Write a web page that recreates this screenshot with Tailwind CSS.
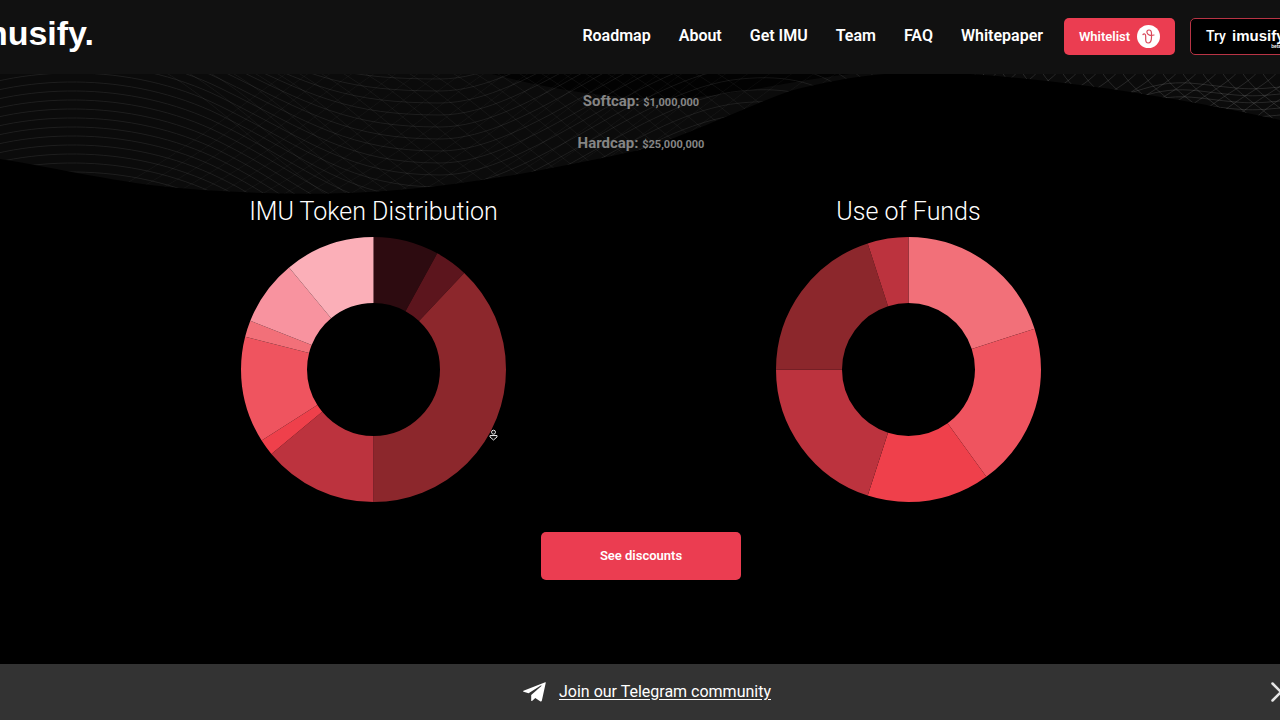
<!DOCTYPE html>
<html lang="en">
<head>
  <meta charset="UTF-8">
  <meta name="viewport" content="width=device-width, initial-scale=1.0">
  <title>imusify. - Token Sale</title>
  <script src="https://cdn.jsdelivr.net/npm/@tailwindcss/browser@4"></script>
</head>
<body class="min-h-screen flex flex-col overflow-x-hidden bg-black font-['Roboto',sans-serif] text-white">
  <header class="h-[74px] overflow-hidden bg-[#111111]">
    <div class="-mx-4 flex h-[73px] items-center justify-between">
      <a href="#" class="-ml-4 pb-2 font-['Liberation_Sans',sans-serif] text-[34px] leading-10 font-bold">imusify.</a>
      <div class="flex shrink-0 items-center">
        <nav class="mr-[21px] flex gap-7 pb-0.5 text-base font-semibold whitespace-nowrap">
          <a href="#roadmap">Roadmap</a>
          <a href="#about">About</a>
          <a href="#get-imu">Get IMU</a>
          <a href="#team">Team</a>
          <a href="#faq">FAQ</a>
          <a href="#whitepaper">Whitepaper</a>
        </nav>
        <button type="button" class="mr-[15px] flex h-[37px] w-[111px] items-center justify-center gap-[7px] rounded-[5px] bg-[#eb3d51] text-[13px] font-semibold">
          Whitelist
          <svg class="size-[23px]" viewBox="0 0 23 23" fill="none" aria-hidden="true">
            <circle cx="11.5" cy="11.5" r="11.5" fill="#fff"/>
            <path d="M6 9.500C7 8.300 8.700 8.800 8.700 11V14.500C8.700 16.800 9.600 18 11.200 18C13.700 18 14.500 15.500 14.500 12V8.500C14.500 6.300 13.500 5 12 5C10.300 5 9.600 6.300 10 7.600C10.600 9.800 13.500 11.200 17 10" stroke="#d9485a" stroke-width="1.200" stroke-linecap="round"/>
          </svg>
        </button>
        <button type="button" class="relative flex h-[37px] w-[106px] items-center gap-[6px] rounded-[5px] border border-[#b83445] bg-black pb-0.5 pl-[15px] text-sm font-medium">
          Try
          <span class="font-['Liberation_Sans',sans-serif] text-[15px] leading-4 font-bold">imusify</span>
          <span class="absolute right-[14px] bottom-[5px] text-[5px] leading-[5px]">beta</span>
        </button>
      </div>
    </div>
  </header>

  <main class="relative flex flex-1 flex-col items-center pt-[15px] pl-0.5">
    <!-- wave background -->
    <svg class="absolute top-0 left-0 h-[122px] w-full" viewBox="0 0 1280 122" preserveAspectRatio="none" fill="none" aria-hidden="true">
      <clipPath id="wave-clip">
        <path d="M0 0V85C40 91 80 101 150 111C220 119 300 122 370 118C470 112 560 93 640 76C700 56 740 35 790 17C820 9 850 3 885 0H970C1070 7 1170 22 1280 46V0Z"/>
      </clipPath>
      <g clip-path="url(#wave-clip)">
        <rect width="1280" height="122" fill="#0b0b0b"/>
        <path d="M492 0C560 18 620 26 680 24C740 21 780 8 850 0Z" fill="#020202"/>
        <g id="wave-lines" stroke="#fff"></g>
      </g>
    </svg>

    <div class="relative flex flex-col items-center gap-[18px] text-[15px] leading-6 font-bold text-[#858585]">
      <p class="h-6">Softcap: <span class="text-[11px]">$1,000,000</span></p>
      <p class="h-6">Hardcap: <span class="text-[11px]">$25,000,000</span></p>
    </div>

    <div class="relative mt-[39px] grid w-full max-w-[1070px] grid-cols-2">
      <section class="flex flex-col items-center gap-[7px]">
        <h2 class="text-[25px] leading-9 font-light">IMU Token Distribution</h2>
        <div class="relative">
          <svg class="size-[265px] -rotate-90" viewBox="0 0 265 265" fill="none" stroke-width="66" role="img" aria-label="IMU Token Distribution">
            <circle cx="132.5" cy="132.5" r="99.5" pathLength="100" stroke="#2d0b10" stroke-dasharray="8 92"/>
            <circle cx="132.5" cy="132.5" r="99.5" pathLength="100" stroke="#5c151d" stroke-dasharray="4 96" stroke-dashoffset="-8"/>
            <circle cx="132.5" cy="132.5" r="99.5" pathLength="100" stroke="#8c272c" stroke-dasharray="38 62" stroke-dashoffset="-12"/>
            <circle cx="132.5" cy="132.5" r="99.5" pathLength="100" stroke="#bc333e" stroke-dasharray="14 86" stroke-dashoffset="-50"/>
            <circle cx="132.5" cy="132.5" r="99.5" pathLength="100" stroke="#ef404b" stroke-dasharray="2 98" stroke-dashoffset="-64"/>
            <circle cx="132.5" cy="132.5" r="99.5" pathLength="100" stroke="#ef545f" stroke-dasharray="13 87" stroke-dashoffset="-66"/>
            <circle cx="132.5" cy="132.5" r="99.5" pathLength="100" stroke="#f27079" stroke-dasharray="2 98" stroke-dashoffset="-79"/>
            <circle cx="132.5" cy="132.5" r="99.5" pathLength="100" stroke="#f8939f" stroke-dasharray="8 92" stroke-dashoffset="-81"/>
            <circle cx="132.5" cy="132.5" r="99.5" pathLength="100" stroke="#fbafb8" stroke-dasharray="11 89" stroke-dashoffset="-89"/>
          </svg>
          <!-- scroll cursor -->
          <svg class="absolute right-2 bottom-[61px] h-[12px] w-[9px]" viewBox="0 0 9 12" fill="#111" stroke="#e5e5e5" aria-hidden="true">
            <circle cx="4.500" cy="3.200" r="2"/>
            <path d="M1 6.500H8V8L4.500 11L1 8Z" stroke-linejoin="round"/>
          </svg>
        </div>
      </section>

      <section class="flex flex-col items-center gap-[7px]">
        <h2 class="text-[25px] leading-9 font-light">Use of Funds</h2>
        <svg class="size-[265px] -rotate-90" viewBox="0 0 265 265" fill="none" stroke-width="66" role="img" aria-label="Use of Funds">
          <circle cx="132.5" cy="132.5" r="99.5" pathLength="100" stroke="#f27079" stroke-dasharray="20 80"/>
          <circle cx="132.5" cy="132.5" r="99.5" pathLength="100" stroke="#ef545f" stroke-dasharray="20 80" stroke-dashoffset="-20"/>
          <circle cx="132.5" cy="132.5" r="99.5" pathLength="100" stroke="#ef404b" stroke-dasharray="15 85" stroke-dashoffset="-40"/>
          <circle cx="132.5" cy="132.5" r="99.5" pathLength="100" stroke="#bc333e" stroke-dasharray="20 80" stroke-dashoffset="-55"/>
          <circle cx="132.5" cy="132.5" r="99.5" pathLength="100" stroke="#8c272c" stroke-dasharray="20 80" stroke-dashoffset="-75"/>
          <circle cx="132.5" cy="132.5" r="99.5" pathLength="100" stroke="#bc333e" stroke-dasharray="5 95" stroke-dashoffset="-95"/>
        </svg>
      </section>
    </div>

    <button type="button" class="mt-[30px] mb-12 h-12 w-[200px] rounded-[5px] bg-[#eb3d51] text-[13px] font-semibold">See discounts</button>
  </main>

  <footer class="sticky bottom-0 flex h-14 items-center justify-center overflow-hidden bg-[#333333] pl-[14px]">
    <a href="#telegram" class="flex items-center gap-[13px] text-base underline underline-offset-2">
      <svg class="h-[20px] w-[23px]" viewBox="0 0 23 20" fill="#fff" aria-hidden="true">
        <path d="M22.200 0.300L0.500 8.700C-0.100 9 0 9.500 0.500 9.700L5.600 11.300L17.800 3.600C18.400 3.200 18.900 3.500 18.400 3.900L8.200 12.900V18.600C8.300 19.300 8.900 19.200 9.300 18.800L12.300 16L17.100 19.300C18 19.700 18.700 19.400 18.900 18.500L22.700 1C22.800 0.400 22.600 0.200 22.200 0.300Z"/>
      </svg>
      Join our Telegram community
    </a>
    <button type="button" aria-label="Close" class="absolute -right-[11px]">
      <svg class="size-5" viewBox="0 0 20 20" fill="none" stroke="#e5e5e5" stroke-width="2.500" stroke-linecap="round">
        <path d="M1.500 1.500L18.500 18.500M18.500 1.500L1.500 18.500"/>
      </svg>
    </button>
  </footer>

  <script>
    const lines = document.getElementById('wave-lines');

    function addLine(d, opacity) {
      const path = document.createElementNS('http://www.w3.org/2000/svg', 'path');
      path.setAttribute('d', d);
      path.setAttribute('stroke-opacity', opacity);
      lines.appendChild(path);
    }

    // long swells running across the left half
    for (let i = -18; i < 14; i++) {
      const y = 7 + i * 9;
      const low = 125 + i * 12;
      addLine(`M-60 ${y + 28}C20 ${y - 8} 130 ${y - 10} 220 ${y + 34}S350 ${low} 440 ${low}S640 ${low - 110} 740 ${low - 120}S860 ${low - 80} 960 ${low}`, 0.08);
    }

    // finer counter swells
    for (let i = 0; i < 26; i++) {
      const x = 150 + i * 22;
      addLine(`M${x} -10C${x + 60} 20 ${x + 100} 70 ${x + 190} 130`, 0.05);
      addLine(`M${x + 150} -10C${x + 90} 30 ${x + 50} 70 ${x - 60} 130`, 0.04);
    }

    // mesh on the right side
    for (let i = 0; i < 18; i++) {
      const x = 960 + i * 20;
      addLine(`M${x} -5C${x + 14} 20 ${x + 40} 30 ${x + 70} 60`, 0.12);
      addLine(`M${x + 20} -5C${x + 4} 16 ${x - 30} 24 ${x - 60} 60`, 0.12);
    }
    for (let i = 0; i < 5; i++) {
      const y = 16 + i * 7;
      addLine(`M1080 ${y + 14}C1140 ${y + 6} 1150 ${y - 12} 1200 ${y - 6}S1250 ${y} 1290 ${y - 4}`, 0.12);
    }
  </script>
</body>
</html>
